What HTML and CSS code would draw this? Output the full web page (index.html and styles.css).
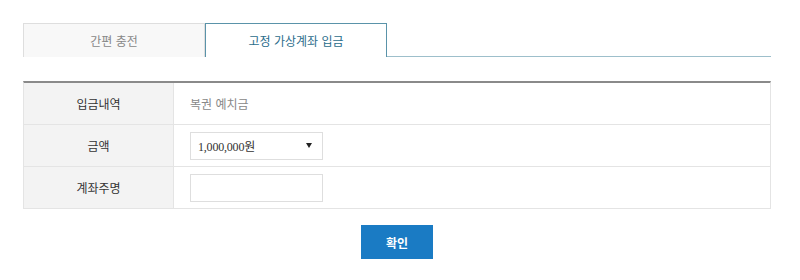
FILE: index.html
```html
<!DOCTYPE html>
<html lang="ko">
<head>
<meta charset="utf-8">
<title>충전</title>
<link rel="stylesheet" href="styles.css">
</head>
<body>
<div class="wrap">
  <div class="tabs">
    <div class="tab">간편 충전</div>
    <div class="tab active">고정 가상계좌 입금</div>
  </div>
  <div class="form">
    <div class="row">
      <div class="label">입금내역</div>
      <div class="value muted">복권 예치금</div>
    </div>
    <div class="row">
      <div class="label">금액</div>
      <div class="value">
        <div class="select"><span class="sel-text">1,000,000원</span><span class="arrow"></span></div>
      </div>
    </div>
    <div class="row">
      <div class="label">계좌주명</div>
      <div class="value"><div class="input"></div></div>
    </div>
  </div>
  <div class="actions"><button class="btn">확인</button></div>
</div>
</body>
</html>
```
FILE: styles.css
```css
* { box-sizing: border-box; }
html, body { margin: 0; padding: 0; background: #fff; }
body { font-family: "Noto Sans CJK KR", "Noto Sans", sans-serif; color: #333; }
.wrap { width: 748px; margin: 23px 0 0 23px; }
.tabs { display: flex; height: 34px; border-bottom: 1px solid #9dbfcb; }
.tab {
  width: 182px; height: 34px;
  display: flex; align-items: center; justify-content: center;
  font-size: 12px; color: #888;
  background: #f8f8f8;
  border: 1px solid #dedede; border-bottom: none;
}
.tab.active {
  background: #fff; color: #2b6d8c;
  border: 1px solid #5a93a9; border-bottom: none;
  height: 34px; margin-bottom: -1px; padding-bottom: 1px;
}
.form { margin-top: 24px; border-top: 2px solid #8a8a8a; border-left: 1px solid #e4e4e4; border-right: 1px solid #e4e4e4; }
.row { display: flex; height: 42px; border-bottom: 1px solid #e4e4e4; }
.label {
  width: 150px; flex: none; background: #f3f3f3;
  border-right: 1px solid #e4e4e4;
  display: flex; align-items: center; justify-content: center;
  font-size: 12px; color: #333;
}
.value { flex: 1; display: flex; align-items: center; padding-left: 16px; font-size: 12px; }
.muted { color: #888; }
.select, .input { width: 133px; height: 28px; border: 1px solid #dedede; background: #fff; }
.select { display: flex; align-items: center; justify-content: space-between; padding: 0 10px 0 7px; }
.sel-text { font-family: "Liberation Serif", "Noto Sans CJK KR", serif; font-size: 12px; color: #333; letter-spacing: -0.2px; }
.arrow { width: 0; height: 0; border-left: 3px solid transparent; border-right: 3px solid transparent; border-top: 5px solid #222; }
.actions { display: flex; justify-content: center; margin-top: 16px; }
.btn {
  width: 72px; height: 34px; border: none; background: #1a7bc4; color: #fff;
  font-family: "Noto Sans CJK KR", sans-serif; font-size: 12px; font-weight: bold;
  padding: 0;
}
```
